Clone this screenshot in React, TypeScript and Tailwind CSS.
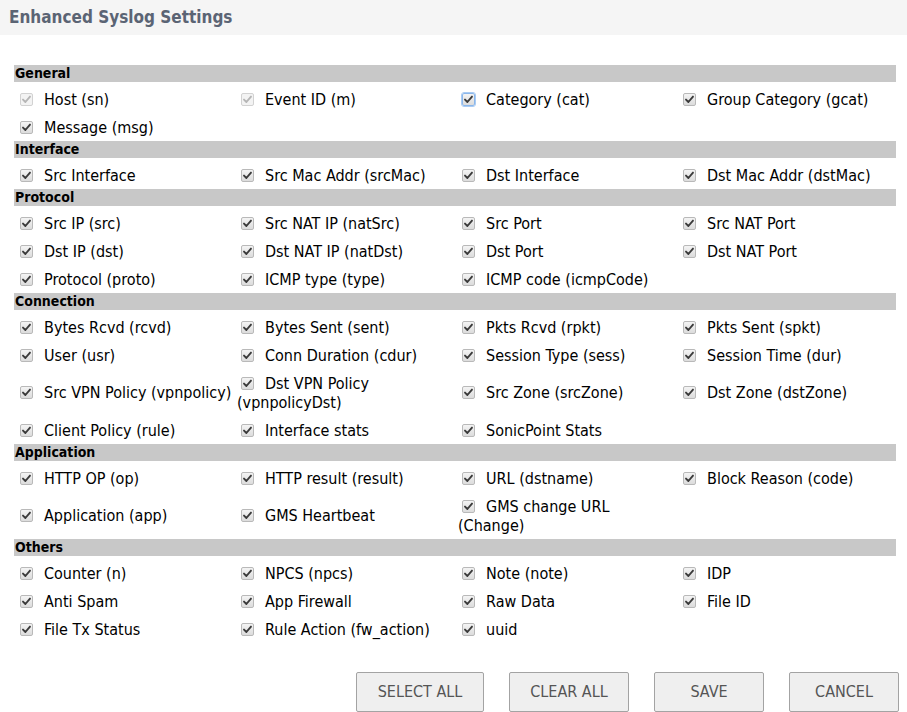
import React from 'react';

type Item = { label: string; second?: string; disabled?: boolean; focused?: boolean };

const sections: { title: string; rows: Item[][] }[] = [
  {
    title: 'General',
    rows: [
      [
        { label: 'Host (sn)', disabled: true },
        { label: 'Event ID (m)', disabled: true },
        { label: 'Category (cat)', focused: true },
        { label: 'Group Category (gcat)' },
      ],
      [{ label: 'Message (msg)' }],
    ],
  },
  {
    title: 'Interface',
    rows: [
      [
        { label: 'Src Interface' },
        { label: 'Src Mac Addr (srcMac)' },
        { label: 'Dst Interface' },
        { label: 'Dst Mac Addr (dstMac)' },
      ],
    ],
  },
  {
    title: 'Protocol',
    rows: [
      [{ label: 'Src IP (src)' }, { label: 'Src NAT IP (natSrc)' }, { label: 'Src Port' }, { label: 'Src NAT Port' }],
      [{ label: 'Dst IP (dst)' }, { label: 'Dst NAT IP (natDst)' }, { label: 'Dst Port' }, { label: 'Dst NAT Port' }],
      [{ label: 'Protocol (proto)' }, { label: 'ICMP type (type)' }, { label: 'ICMP code (icmpCode)' }],
    ],
  },
  {
    title: 'Connection',
    rows: [
      [
        { label: 'Bytes Rcvd (rcvd)' },
        { label: 'Bytes Sent (sent)' },
        { label: 'Pkts Rcvd (rpkt)' },
        { label: 'Pkts Sent (spkt)' },
      ],
      [
        { label: 'User (usr)' },
        { label: 'Conn Duration (cdur)' },
        { label: 'Session Type (sess)' },
        { label: 'Session Time (dur)' },
      ],
      [
        { label: 'Src VPN Policy (vpnpolicy)' },
        { label: 'Dst VPN Policy', second: '(vpnpolicyDst)' },
        { label: 'Src Zone (srcZone)' },
        { label: 'Dst Zone (dstZone)' },
      ],
      [{ label: 'Client Policy (rule)' }, { label: 'Interface stats' }, { label: 'SonicPoint Stats' }],
    ],
  },
  {
    title: 'Application',
    rows: [
      [
        { label: 'HTTP OP (op)' },
        { label: 'HTTP result (result)' },
        { label: 'URL (dstname)' },
        { label: 'Block Reason (code)' },
      ],
      [{ label: 'Application (app)' }, { label: 'GMS Heartbeat' }, { label: 'GMS change URL', second: '(Change)' }],
    ],
  },
  {
    title: 'Others',
    rows: [
      [{ label: 'Counter (n)' }, { label: 'NPCS (npcs)' }, { label: 'Note (note)' }, { label: 'IDP' }],
      [{ label: 'Anti Spam' }, { label: 'App Firewall' }, { label: 'Raw Data' }, { label: 'File ID' }],
      [{ label: 'File Tx Status' }, { label: 'Rule Action (fw_action)' }, { label: 'uuid' }],
    ],
  },
];

function Check({ disabled, focused }: { disabled?: boolean; focused?: boolean }) {
  return (
    <span
      className={
        'relative inline-block align-[-1px] w-[13px] h-[13px] ml-[4px] mr-[11px] rounded-[2px] border ' +
        (disabled
          ? 'border-[#d2d2d2] bg-[#f3f3f3]'
          : focused
          ? 'border-[#8ab6ea] bg-gradient-to-b from-[#f4f4f4] to-[#dcdcdc] outline outline-[1px] outline-[#a9cbf3]'
          : 'border-[#b9b9b9] bg-gradient-to-b from-[#f4f4f4] to-[#dcdcdc]')
      }
    >
      <svg viewBox="0 0 13 13" className="absolute left-[-1px] top-[-1px] w-[13px] h-[13px]">
        <path
          d="M3 6.6 L5.4 9 L10 3.6"
          fill="none"
          stroke={disabled ? '#b5b5b5' : '#3a3a3a'}
          strokeWidth="1.9"
          strokeLinecap="round"
          strokeLinejoin="round"
        />
      </svg>
    </span>
  );
}

export default function App() {
  return (
    <div
      className="w-[907px] h-[712px] bg-white text-black overflow-hidden"
      style={{ fontFamily: '"DejaVu Sans Condensed", "DejaVu Sans", Tahoma, sans-serif' }}
    >
      <div className="h-[35px] bg-[#f5f5f5] pl-[9px] flex items-center text-[17px] font-bold text-[#5b6474]">
        Enhanced Syslog Settings
      </div>

      <div className="mt-[30px] ml-[14px] w-[882px]">
        {sections.map((s) => (
          <div key={s.title}>
            <div className="h-[17px] leading-[17px] bg-[#c8c8c8] pl-[1px] text-[14px] font-bold mb-[3px]">
              {s.title}
            </div>
            {s.rows.map((row, ri) => (
              <div key={ri} className="grid grid-cols-[221px_221px_221px_221px] pl-[2px]">
                {row.map((it) => (
                  <div
                    key={it.label}
                    className="flex items-center min-h-[28px] py-[4.5px] text-[16px] leading-[19px] whitespace-nowrap"
                  >
                    <div>
                      <Check disabled={it.disabled} focused={it.focused} />
                      {it.label}
                      {it.second && (
                        <>
                          <br />
                          {it.second}
                        </>
                      )}
                    </div>
                  </div>
                ))}
              </div>
            ))}
          </div>
        ))}
      </div>

      <div className="flex justify-end gap-[25px] pr-[8px] mt-[29px]">
        {[
          ['SELECT ALL', 'w-[128px]'],
          ['CLEAR ALL', 'w-[120px]'],
          ['SAVE', 'w-[110px]'],
          ['CANCEL', 'w-[110px]'],
        ].map(([t, w]) => (
          <button
            key={t}
            className={w + ' h-[40px] rounded-[2px] border border-[#a3a3a3] bg-[#efefef] text-[16px] text-[#555555]'}
          >
            {t}
          </button>
        ))}
      </div>
    </div>
  );
}
